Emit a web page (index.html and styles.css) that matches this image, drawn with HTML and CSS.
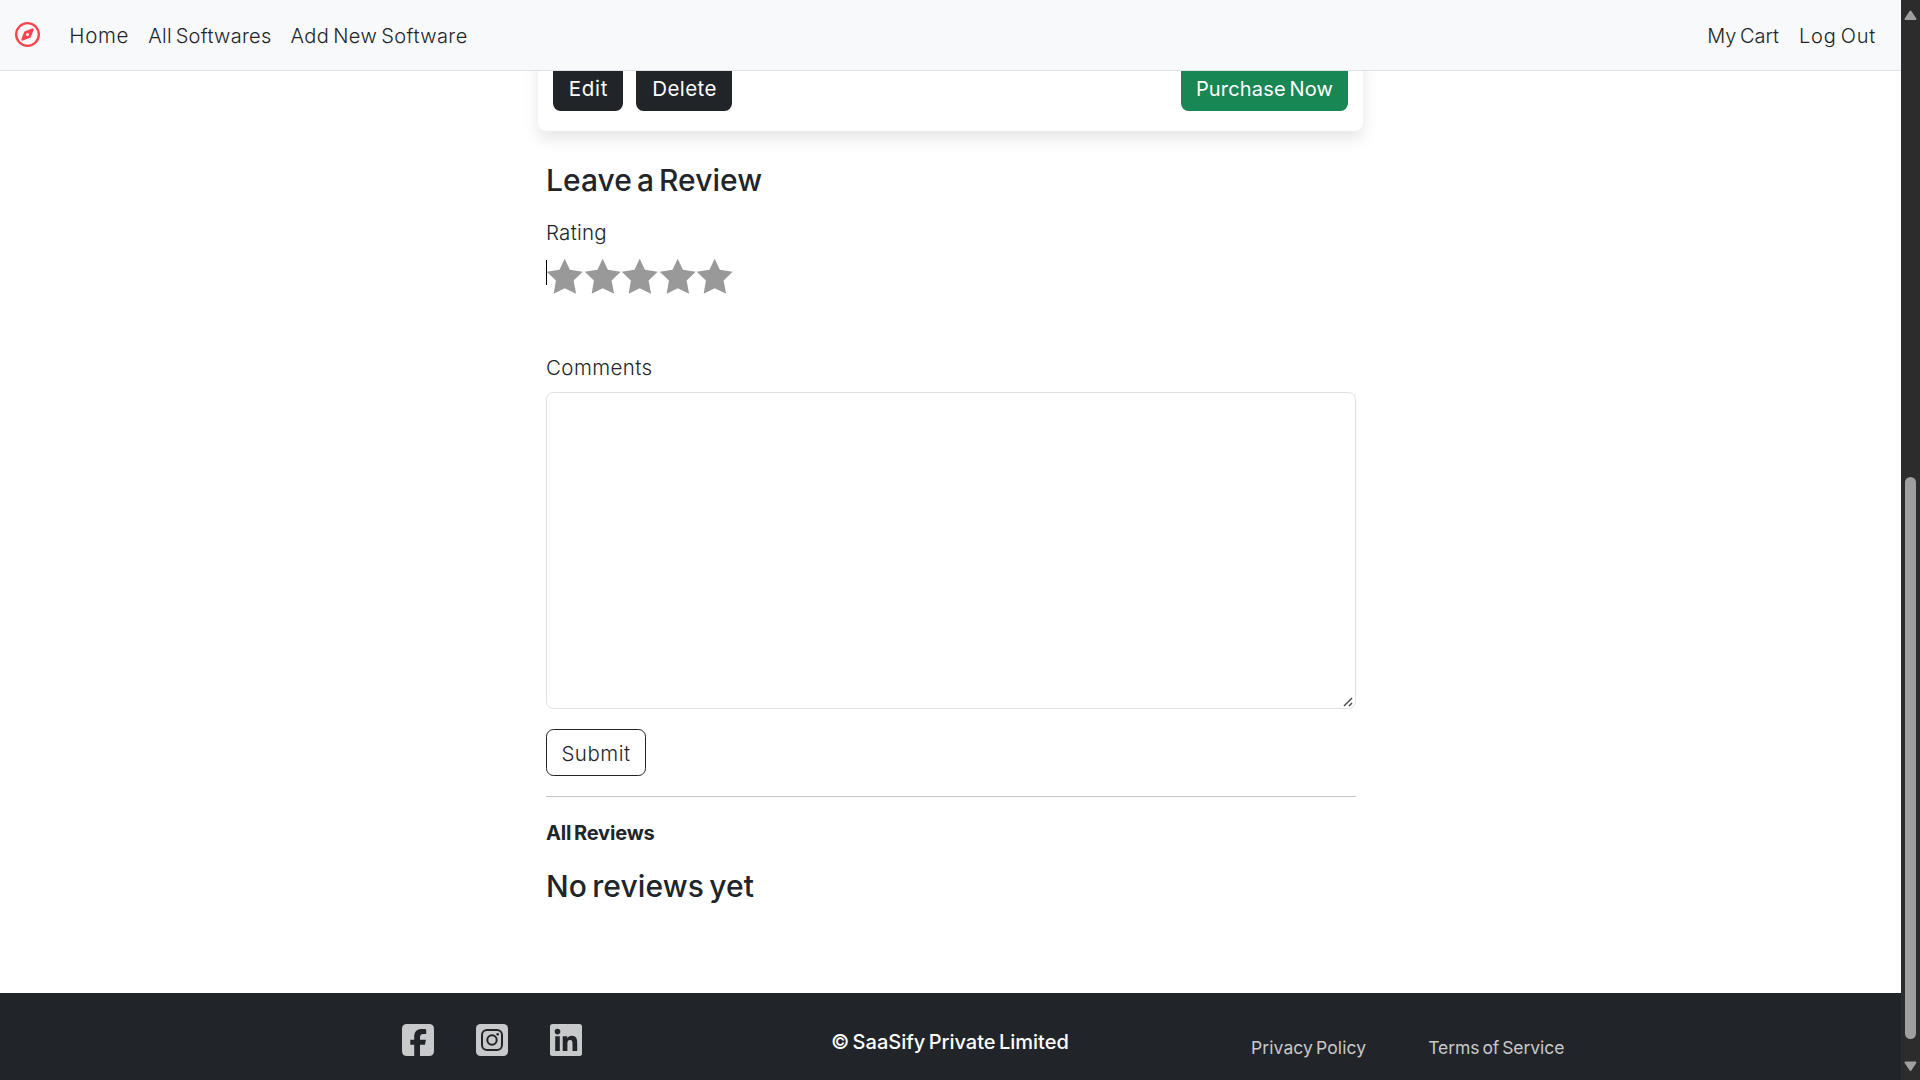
FILE: index.html
```html
<!DOCTYPE html>
<html lang="en">
<head>
<meta charset="utf-8">
<title>SaaSify</title>
<link rel="stylesheet" href="styles.css">
</head>
<body>
<svg class="defs" width="0" height="0"><defs><path id="star" fill="#999" d="M18.700 .7L23.900 11.700L36.700 13.800L27.600 22.600L30.100 35.800L18.700 30.200L7.700 35.800L9.900 22.600L.7 13.800L13.500 11.700Z"/></defs></svg>
<div class="page">
  <header class="navbar">
    <a class="brand" href="#"><svg width="25" height="25" viewBox="0 0 512 512"><path fill="#fe424d" d="M464 256A208 208 0 1 0 48 256a208 208 0 1 0 416 0zM0 256a256 256 0 1 1 512 0A256 256 0 1 1 0 256zm306.700 69.100L162.400 380.600c-19.400 7.500-38.500-11.600-31-31l55.500-144.300c3.300-8.500 9.900-15.100 18.400-18.400l144.300-55.500c19.400-7.500 38.500 11.600 31 31L325.100 306.700c-3.200 8.500-9.900 15.100-18.400 18.400zM288 256a32 32 0 1 0-64 0 32 32 0 1 0 64 0z"/></svg></a>
    <nav class="links">
      <a class="t-home" href="#">Home</a>
      <a class="t-all" href="#">All Softwares</a>
      <a class="t-add" href="#">Add New Software</a>
    </nav>
    <nav class="links account">
      <a class="t-cart" href="#">My Cart</a>
      <a class="t-logout" href="#">Log Out</a>
    </nav>
  </header>
  <main class="content">
    <section class="card">
      <a class="btn edit" href="#"><span class="t-edit">Edit</span></a>
      <a class="btn delete" href="#"><span class="t-delete">Delete</span></a>
      <a class="btn buy" href="#"><span class="t-buy">Purchase Now</span></a>
    </section>
    <form class="review">
      <h4 class="title"><span class="t-leave">Leave a Review</span></h4>
      <div class="label"><span class="t-rating">Rating</span></div>
      <div class="stars">
        <i class="caret"></i>
        <svg viewBox="0 0 37.500 37.500"><use href="#star"/></svg>
        <svg viewBox="0 0 37.500 37.500"><use href="#star"/></svg>
        <svg viewBox="0 0 37.500 37.500"><use href="#star"/></svg>
        <svg viewBox="0 0 37.500 37.500"><use href="#star"/></svg>
        <svg viewBox="0 0 37.500 37.500"><use href="#star"/></svg>
      </div>
      <div class="label"><span class="t-comments">Comments</span></div>
      <div class="textarea"><svg width="10" height="10" viewBox="0 0 10 10"><path d="M1 9L9 1M6 9L9 6" stroke="#4b4b4b" stroke-width="1.500"/></svg></div>
      <button class="submit" type="button"><span class="t-submit">Submit</span></button>
    </form>
    <section class="reviews">
      <p class="subtitle"><span class="t-reviews">All Reviews</span></p>
      <h4 class="title"><span class="t-none">No reviews yet</span></h4>
    </section>
  </main>
  <footer class="footer">
    <div class="social">
      <svg width="32" height="32" viewBox="0 0 32 32"><path fill="#c8c9ca" d="M5 0H27Q32 0 32 5V27Q32 32 27 32H18V20.700H23L23.900 15.700H18V13.800C18 11 19.100 10 21.700 10C22.600 10 23.500 10 24.200 10.100V5.600C23.400 5.300 21.700 5.100 20.200 5.100C14.800 5.100 12.200 7.600 12.200 13.200V15.700H8.300V20.700H12.200V32H5Q0 32 0 27V5Q0 0 5 0Z"/></svg>
      <svg width="32" height="32" viewBox="0 0 32 32"><rect width="32" height="32" rx="4.500" fill="#c8c9ca"/><rect x="6" y="6" width="20" height="20" rx="5" fill="none" stroke="#212529" stroke-width="2"/><circle cx="16" cy="16" r="4.700" fill="none" stroke="#212529" stroke-width="2"/><circle cx="21.700" cy="10.300" r="1.300" fill="#212529"/></svg>
      <svg width="32" height="32" viewBox="0 0 32 32"><rect width="32" height="32" rx="2.500" fill="#c8c9ca"/><circle cx="7.500" cy="7.600" r="2.800" fill="#212529"/><path fill="#212529" d="M5.200 12.200H9.800V27H5.200ZM12.700 12.200H17.200V14.200C18 12.800 19.600 11.800 21.700 11.800C26.200 11.800 27.200 14.800 27.200 18.900V27H22.500V19.800C22.500 18 22.400 15.900 20 15.900C17.800 15.900 17.400 17.700 17.400 19.700V27H12.700Z"/></svg>
    </div>
    <div class="copyright"><span class="t-copy">© SaaSify Private Limited</span></div>
    <div class="legal">
      <a class="t-privacy" href="#">Privacy Policy</a>
      <a class="t-terms" href="#">Terms of Service</a>
    </div>
  </footer>
</div>
<aside class="scrollbar">
  <svg width="13" height="11" viewBox="0 0 13 11"><path d="M6.500 1.500L11.500 9H1.500Z" fill="#9f9f9f" stroke="#9f9f9f" stroke-width="2" stroke-linejoin="round"/></svg>
  <div class="thumb"></div>
  <svg width="13" height="11" viewBox="0 0 13 11"><path d="M6.500 9L11.500 1.500H1.500Z" fill="#9f9f9f" stroke="#9f9f9f" stroke-width="2" stroke-linejoin="round"/></svg>
</aside>
</body>
</html>
```
FILE: styles.css
```css
* { box-sizing: border-box; }
body { margin: 0; display: flex; height: 1080px; overflow: hidden; background: #fff; font: 300 20px/30px Inter, sans-serif; word-spacing: -2px; color: #212529; }
svg { display: block; }
a { color: inherit; text-decoration: none; }
.defs { display: none; }
.page { width: 1901px; height: 1080px; display: flex; flex-direction: column; overflow: hidden; }

.navbar { position: relative; z-index: 1; flex: none; height: 71px; display: flex; align-items: center; padding: 0 25px 0 15px; background: #f8f9fa; border-bottom: 1px solid #dee2e6; }
.brand { margin: 0 29.3px 1px 0; }
.links { display: flex; gap: 19px; padding-top: 2px; }
.account { margin-left: auto; gap: 20px; }
.t-home { font-size: 20.5px; letter-spacing: .7px; }
.t-all { letter-spacing: .27px; }
.t-add { letter-spacing: .42px; }
.t-cart { letter-spacing: 0; }
.t-logout { letter-spacing: .75px; }

.content { flex: none; height: 922px; padding-left: 546px; }
.card { display: flex; align-items: flex-end; width: 825px; height: 80px; margin: -20px 0 0 -8px; padding: 0 15px 20px; border-radius: 8px; box-shadow: 0 8px 16px rgba(0, 0, 0, .1); }
.btn { height: 47px; padding: 10px 0 0; text-align: center; border-radius: 7.5px; background: #212529; color: #fff; font-weight: 400; }
.edit { width: 70px; margin-right: 13px; }
.delete { width: 96px; }
.buy { width: 167px; margin-left: auto; background: #198754; }
.t-edit { font-size: 20.5px; letter-spacing: .7px; margin-right: -1px; }
.t-delete { font-size: 20.5px; letter-spacing: .4px; margin-right: -1px; }
.t-buy { letter-spacing: .17px; }

.title { margin: 0; font-size: 30px; line-height: 36px; font-weight: 450; word-spacing: -3px; }
.review { width: 810px; height: 666px; padding-top: 31px; border-bottom: 1px solid #c4c6c8; }
.review .label { margin-top: 19px; }
.review .title + .label { margin-top: 20px; }
.stars { position: relative; display: flex; height: 86px; padding-top: 10px; }
.stars svg { width: 37.5px; height: 37.5px; }
.caret { position: absolute; left: 0; top: 12px; width: 1px; height: 25px; background: #000; }
.t-leave { letter-spacing: .03px; }
.t-rating { font-size: 20.5px; letter-spacing: .25px; }
.t-comments { font-size: 20.5px; letter-spacing: .4px; }
.textarea { display: flex; align-items: flex-end; justify-content: flex-end; height: 317px; margin-top: 9px; padding: 0 2px 1px; border: 1px solid #dee2e6; border-radius: 7.5px; }
.submit { display: block; width: 100px; height: 47px; margin-top: 20px; padding: 2px 0 0; border: 1px solid #212529; border-radius: 7.5px; background: #fff; color: inherit; font: inherit; }
.t-submit { font-size: 20.5px; letter-spacing: .5px; }

.subtitle { margin: 21px 0 20px; font-weight: 700; }
.t-reviews { letter-spacing: -.15px; }
.t-none { letter-spacing: .12px; }

.footer { flex: none; height: 87px; display: flex; align-items: flex-start; background: #212529; color: #fff; }
.social { display: flex; gap: 42px; width: 831px; padding: 31px 0 0 402px; }
.copyright { width: 420px; padding-top: 34px; font-weight: 500; }
.t-copy { letter-spacing: 0; }
.legal { display: flex; gap: 62px; padding-top: 40px; font-size: 17.5px; font-weight: 400; color: #c8c9ca; }
.t-privacy { letter-spacing: .1px; }
.t-terms { letter-spacing: -.05px; }

.scrollbar { display: flex; flex-direction: column; align-items: center; width: 19px; height: 1080px; padding: 10px 0 8px; background: #2c2c2c; }
.thumb { width: 11px; height: 562px; margin: 456px 0 auto; border-radius: 6px; background: #9f9f9f; }
```
